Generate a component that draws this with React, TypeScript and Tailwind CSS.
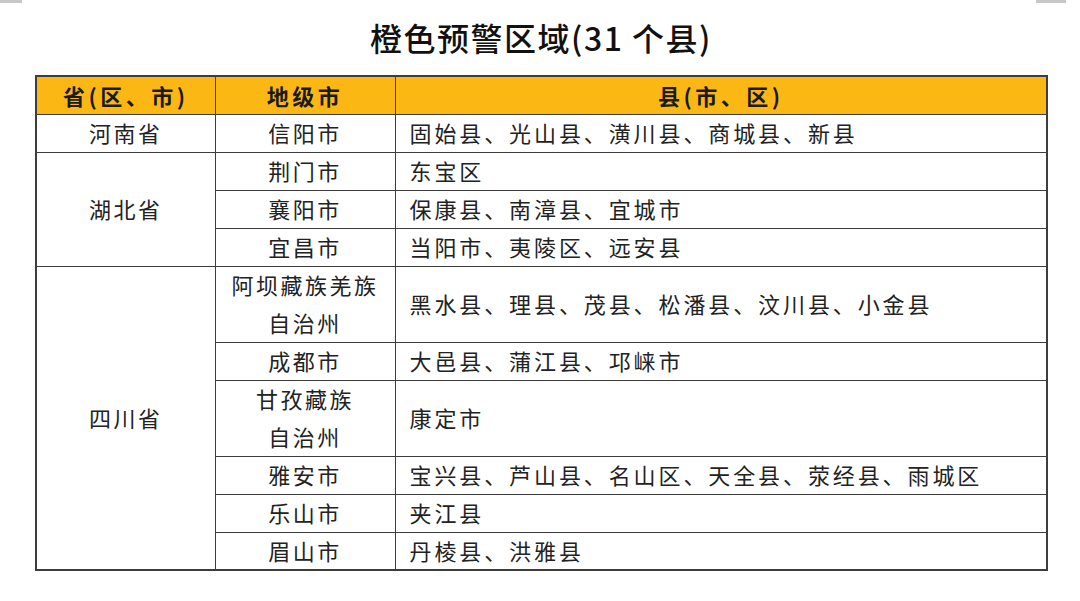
import React from 'react';

type SubRow = { city: string[]; counties: string; tall?: boolean };
type Group = { province: string; rows: SubRow[] };

const groups: Group[] = [
  { province: '河南省', rows: [{ city: ['信阳市'], counties: '固始县、光山县、潢川县、商城县、新县' }] },
  {
    province: '湖北省',
    rows: [
      { city: ['荆门市'], counties: '东宝区' },
      { city: ['襄阳市'], counties: '保康县、南漳县、宜城市' },
      { city: ['宜昌市'], counties: '当阳市、夷陵区、远安县' },
    ],
  },
  {
    province: '四川省',
    rows: [
      { city: ['阿坝藏族羌族', '自治州'], counties: '黑水县、理县、茂县、松潘县、汶川县、小金县', tall: true },
      { city: ['成都市'], counties: '大邑县、蒲江县、邛崃市' },
      { city: ['甘孜藏族', '自治州'], counties: '康定市', tall: true },
      { city: ['雅安市'], counties: '宝兴县、芦山县、名山区、天全县、荥经县、雨城区' },
      { city: ['乐山市'], counties: '夹江县' },
      { city: ['眉山市'], counties: '丹棱县、洪雅县' },
    ],
  },
];

const cell = 'border border-[#3d3d3d] p-0 align-middle';

export default function App() {
  return (
    <div
      className="relative w-[1080px] h-[601px] bg-white text-[#222] overflow-hidden"
      style={{ fontFamily: '"Noto Sans CJK SC", "Noto Sans", sans-serif' }}
    >
      {/* scan artifacts in the top corners */}
      <div className="absolute left-0 top-0 w-[22px] h-[3px] bg-[#c8c8c8]" />
      <div className="absolute left-[1036px] top-0 w-[30px] h-[3px] bg-[#c8c8c8]" />

      <div className="h-[75px] flex items-center justify-center pb-[2px] pl-[2px]">
        <h1 className="text-[32px] font-medium tracking-[1.5px] leading-none text-[#111]">
          橙色预警区域(31 个县)
        </h1>
      </div>

      <div className="pl-[35px]">
        <table className="border-collapse border-2 border-[#3d3d3d] w-[1011px] table-fixed">
          <colgroup>
            <col className="w-[179px]" />
            <col className="w-[180px]" />
            <col className="w-[652px]" />
          </colgroup>
          <thead>
            <tr className="h-[38px] bg-[#fbb714] text-[22px] font-bold leading-none text-[#1a1a1a]">
              <th className={`${cell} text-center tracking-[3.5px]`}>省(区、市)</th>
              <th className={`${cell} text-center tracking-[3.5px]`}>地级市</th>
              <th className={`${cell} text-center tracking-[3.5px]`}>县(市、区)</th>
            </tr>
          </thead>
          <tbody className="text-[22px] leading-none">
            {groups.map((g) =>
              g.rows.map((r, i) => (
                <tr key={g.province + i} className={r.tall ? 'h-[76px]' : 'h-[38px]'}>
                  {i === 0 && (
                    <td rowSpan={g.rows.length} className={`${cell} text-center tracking-[2.5px] pb-[2px]`}>
                      {g.province}
                    </td>
                  )}
                  <td className={`${cell} text-center tracking-[2.5px] pb-[2px]`}>
                    <div className="flex flex-col items-center gap-[16px]">
                      {r.city.map((c) => (
                        <span key={c}>{c}</span>
                      ))}
                    </div>
                  </td>
                  <td className={`${cell} pl-[14px] tracking-[2.9px] pb-[2px]`}>{r.counties}</td>
                </tr>
              ))
            )}
          </tbody>
        </table>
      </div>
    </div>
  );
}
